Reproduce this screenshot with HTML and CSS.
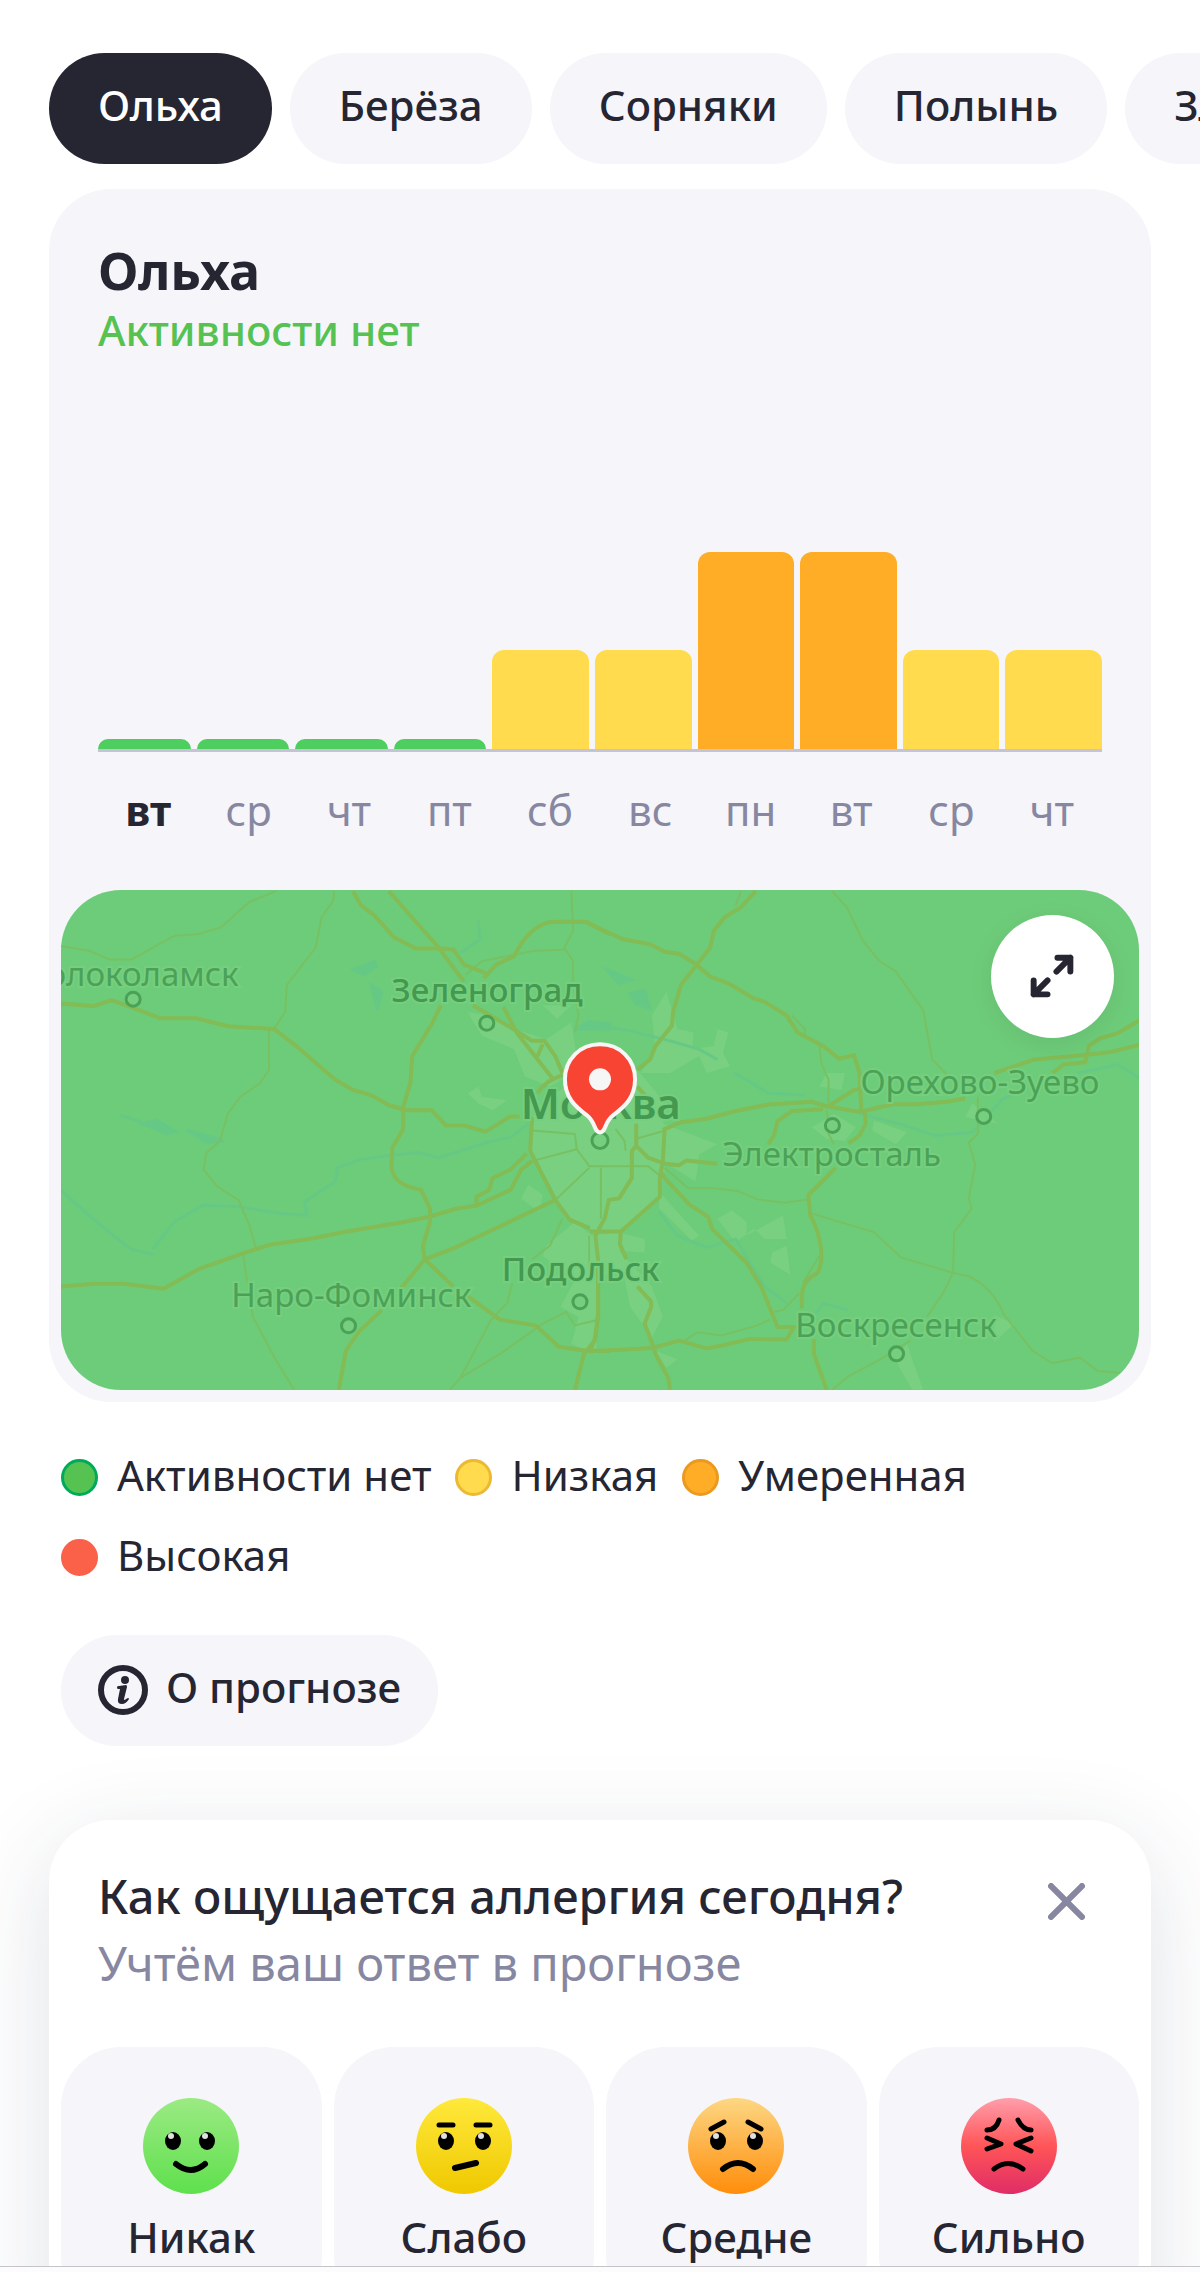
FILE: index.html
```
<!DOCTYPE html>
<html lang="ru">
<head>
    <meta charset="UTF-8">
    <meta name="viewport" content="width=device-width, initial-scale=1.0">
    <title>Аллергия: прогноз</title>
    <link rel="stylesheet" href="styles.css">
</head>
<body>
    <main class="page">
        <nav class="tabs" aria-label="Аллергены">
            <button class="tab tab-active" type="button">Ольха</button>
            <button class="tab" type="button">Берёза</button>
            <button class="tab" type="button">Сорняки</button>
            <button class="tab" type="button">Полынь</button>
            <button class="tab" type="button">Злаки</button>
        </nav>

        <section class="forecast">
            <header class="forecast-header">
                <h1>Ольха</h1>
                <p class="forecast-level">Активности нет</p>
            </header>

            <div class="chart">
                <div class="bar none"></div>
                <div class="bar none"></div>
                <div class="bar none"></div>
                <div class="bar none"></div>
                <div class="bar low"></div>
                <div class="bar low"></div>
                <div class="bar medium"></div>
                <div class="bar medium"></div>
                <div class="bar low"></div>
                <div class="bar low"></div>
            </div>
            <div class="days">
                <span class="today">вт</span>
                <span>ср</span>
                <span>чт</span>
                <span>пт</span>
                <span>сб</span>
                <span>вс</span>
                <span>пн</span>
                <span>вт</span>
                <span>ср</span>
                <span>чт</span>
            </div>

            <div class="map">
                <svg class="map-picture" viewBox="0 0 1076 499" aria-label="Карта активности">
                    <!-- west half -->
                    <g transform="translate(-12 -10) scale(.35714 .33807)">
                        <g class="land">
                            <path d="M1350 700L1460 590L1600 560V1040L1530 1040L1450 1000L1400 900L1350 820Z" />
                            <path d="M1170 390L1230 400L1300 440L1390 470L1460 420L1480 560L1400 610L1330 580L1300 500L1210 460Z" />
                            <path d="M1170 630L1200 610L1210 640L1280 650L1240 680L1200 660Z" />
                            <path d="M1340 900L1380 930L1370 980L1320 940Z" />
                            <path d="M1390 1080L1470 1010L1530 1060V1400L1460 1370L1480 1290L1430 1260L1470 1180L1380 1110Z" />
                            <path d="M1380 370H1460L1420 410Z" />
                        </g>
                        <g class="water">
                            <path class="lake" d="M850 265L910 240L915 255L880 280ZM900 310L930 330L918 385ZM260 720L300 708L355 742L330 750ZM385 738L490 770L440 775ZM1470 440L1510 418L1568 425V440Z" />
                            <path d="M200 695L260 715M33 915L90 970L180 1050L230 1090L290 1105M290 1090L350 1010L430 960L530 965L650 985L720 990L715 950L800 890L805 850L870 825L940 815L1030 805L1090 820L1180 790L1240 770L1290 760L1340 720M1200 120L1205 175L1150 215" />
                        </g>
                        <g class="road-thin">
                            <path d="M33 195L115 210L170 235H230L350 165L415 160L480 140L560 65L635 33M797 33L795 60L762 110L745 200L665 310L660 390L630 438M615 440V560L590 600L535 640L500 690L478 770L440 805L432 855L470 905L530 945L560 1020L578 1085M543 1105L550 1160L570 1290L630 1410L685 1505" />
                            <path d="M1460 33L1465 150L1440 200L1465 240V310L1480 400L1470 450M1440 205L1350 210L1210 240L1165 280M1435 1000L1400 1080L1350 1120M1295 1190L1280 1250L1235 1300L1150 1470L1120 1505M1150 1470L1260 1400L1380 1310L1445 1275L1470 1315L1530 1300M1415 945L1510 850M1350 830L1475 795L1470 750L1350 740M1475 795L1510 845H1568M1545 845L1530 1030M1510 1050V1150" />
                        </g>
                        <g class="road">
                            <path d="M33 365L125 372L175 355L220 372L310 408H410L500 432L630 440L700 498L800 590L850 620L900 635L950 665L1000 680H1070L1110 725H1160L1220 743L1290 698H1315" />
                            <path d="M33 1200L130 1192H210L320 1207L420 1148L540 1103L620 1076L740 1058L820 1040L980 1012L1060 995L1140 970L1195 962V935L1230 915L1240 880L1290 855L1335 808M1195 962L1290 915L1320 855L1350 830" />
                            <path d="M850 33L872 75L910 105L965 170L1025 202H1100L1130 205L1160 250L1220 275M950 33L1085 195L1160 300M1215 290L1250 250L1300 225C1330 160 1370 125 1410 123H1500L1568 160M1185 370L1290 435L1350 475L1385 475L1415 520L1435 570M1270 375L1310 455L1410 590M1380 485L1365 520M1365 630C1390 590 1410 590 1435 575" />
                            <path d="M1095 370L1070 425L1015 520L1010 600L990 670V735L960 790L957 850C965 890 990 905 1040 915L1065 970V1010L1045 1080L1050 1120L985 1205M930 1270L865 1335L830 1390L810 1505M1050 1120L1130 1200M1165 1225L1260 1298L1360 1315L1425 1378L1500 1390H1568M1050 1120L1130 1088L1415 945" />
                            <path d="M1350 700L1345 800L1415 945L1455 1003L1530 1037H1568M1565 940L1530 1037L1535 1120V1290L1525 1360L1495 1400L1470 1505" />
                        </g>
                    </g>
                    <!-- east half -->
                    <g transform="translate(528 -10) scale(.3635 .33807)">
                        <g class="land">
                            <path d="M0 620L130 560L200 650L205 860L190 930L90 1035L0 1040Z" />
                            <path d="M170 400L210 330L240 440L285 450L280 500L340 490L350 440L380 450L365 510L385 550L320 570L300 520L220 570H140L180 500Z" />
                            <path d="M610 730L670 690L730 730L700 770L650 765ZM650 570L700 570L690 620L630 610ZM780 710L870 745L840 780L775 740ZM200 720L350 780L300 810L290 890L200 830ZM350 1000L390 975L430 1010V1050L530 990L540 1060L480 1060L450 1030L400 1070ZM500 1100L540 1080L550 1165L495 1130ZM190 920L240 980L300 1050L280 1065L190 970ZM1050 660L1120 720L1030 700Z" />
                            <path d="M0 1050L80 1040L150 1060V1100L80 1095L170 1200L200 1290L170 1350L110 1260L90 1150L0 1180ZM180 1390L240 1415L210 1440ZM870 1370L915 1505H885L840 1420ZM1110 1285L1165 1310L1110 1365Z" />
                        </g>
                        <g class="water">
                            <path class="lake" d="M40 260L115 295L80 305ZM110 335L150 325L165 380L125 365Z" />
                            <path d="M0 425L110 445L220 475L300 500L350 530M395 570L430 590L490 630L590 635M740 690L850 720L950 755L1050 745L1130 650L1200 610M190 980L240 1050L320 1085L400 1060L440 1130L480 1200L540 1250M620 1280L640 1250L710 1270M1340 570L1450 545L1508 585" />
                        </g>
                        <g class="road-thin">
                            <path d="M665 33L705 80L750 180L795 240L840 270L915 385L940 530L980 575M1065 640V750L1040 775L1058 840L1040 940L1048 970L1000 1040L997 1160L970 1220L925 1290M880 1360L790 1420L710 1465L665 1505M610 985L780 1040L855 1115L997 1160L1040 1170C1090 1195 1120 1240 1135 1280L1215 1390L1270 1427L1345 1410L1395 1450L1455 1455" />
                            <path d="M630 490L635 540L655 590V660M650 680L655 750L670 780M205 850L270 910H340L405 918L460 943L535 953L598 943M415 33L400 75M30 850V1000M0 845H160L200 880M125 765L205 740M70 735L95 770L98 800M505 1275L530 1270L575 1220M260 1360L295 1335L360 1345L460 1315L495 1297M555 400L590 440V460M630 1110L585 1190" />
                        </g>
                        <g class="road">
                            <path d="M0 130L90 175L165 190L205 212L245 218L290 248L330 285L380 305L450 350L480 360L540 400L570 450L640 490L685 528L725 517L740 570L745 680M455 33L415 80L370 110L340 150L330 200L290 255L250 310L228 390L225 430L180 490L165 530L130 560" />
                            <path d="M200 738L250 715L320 705L400 682L490 663L610 655L650 668L740 685L830 662H900L980 655L1030 645M1110 570L1220 530L1360 517L1430 508L1508 487M1270 570L1300 545L1360 538L1370 490L1400 468L1450 452L1508 415M655 668L725 620L740 618M755 685L757 720L740 755L710 778M640 677L555 682L515 712L505 755L490 780" />
                            <path d="M130 610L155 640M127 720V785L160 820L205 838L245 842L265 828L350 838M205 738L200 830L192 880V935L85 1038H0M127 785L115 800V880L80 940L52 945L40 1000L15 1050L22 1120V1280L15 1350L0 1392M0 1392L170 1382L245 1360L320 1383L360 1375L440 1355L540 1357L560 1320H515L470 1200L430 1130L335 1030L325 995L275 960L205 880L192 855" />
                            <path d="M85 1038L82 1075L100 1120M130 1200L168 1245V1260L150 1310L175 1380L180 1400L215 1470L220 1505M675 850L600 930L605 990C635 1050 645 1120 625 1160C590 1180 578 1200 582 1265M615 1355V1400L635 1460L650 1505" />
                        </g>
                    </g>

                    <g class="town">
                        <circle cx="72" cy="109" r="7" />
                        <circle cx="425" cy="133" r="7" />
                        <circle cx="538" cy="250" r="8" />
                        <circle cx="287" cy="435" r="7" />
                        <circle cx="518" cy="411" r="7" />
                        <circle cx="770" cy="235" r="7" />
                        <circle cx="921" cy="226" r="7" />
                        <circle cx="834" cy="463" r="7" />
                    </g>
                    <g class="town-name">
                        <text x="-36" y="96">Волоколамск</text>
                        <text x="170" y="416">Наро-Фоминск</text>
                        <text x="798" y="204">Орехово-Зуево</text>
                        <text x="660" y="275">Электросталь</text>
                        <text x="733" y="446">Воскресенск</text>
                        <text class="strong" x="330" y="112">Зеленоград</text>
                        <text class="strong" x="440" y="390">Подольск</text>
                        <text class="capital" x="459" y="229">Москва</text>
                    </g>

                    <path class="pin" d="M538 154C518 154 503 169 503 189C503 207 513 216 525 225C534 232 532 242 538 242C544 242 542 232 551 225C563 216 573 207 573 189C573 169 558 154 538 154Z" />
                    <circle class="pin-hole" cx="538" cy="189" r="11" />
                </svg>
                <button class="map-expand" type="button" aria-label="Развернуть карту">
                    <svg viewBox="0 0 124 124">
                        <path d="M66 57L80 43M67 43H80V57M57 66L43 80M43 66V80H57" />
                    </svg>
                </button>
            </div>
        </section>

        <ul class="legend">
            <li><span class="dot dot-none"></span>Активности нет</li>
            <li><span class="dot dot-low"></span>Низкая</li>
            <li><span class="dot dot-medium"></span>Умеренная</li>
            <li><span class="dot dot-high"></span>Высокая</li>
        </ul>

        <button class="about" type="button">
            <svg class="about-icon" viewBox="0 0 50 50">
                <circle class="ring" cx="25" cy="25" r="22" />
                <circle cx="27" cy="15" r="4" />
                <path d="M19 22Q19 21 21 21L28 20Q29 20 29 22L26 34Q26 36 28 34L30 33Q31 33 31 34Q28 39 24 39Q19 39 20 34L22 24L20 24Q19 24 19 22Z" />
            </svg>
            О прогнозе
        </button>

        <section class="survey">
            <header class="survey-header">
                <div>
                    <h2>Как ощущается аллергия сегодня?</h2>
                    <p>Учтём ваш ответ в прогнозе</p>
                </div>
                <button class="close" type="button" aria-label="Закрыть">
                    <svg viewBox="0 0 36 36"><path d="M3 3L33 33M33 3L3 33" /></svg>
                </button>
            </header>
            <div class="answers">
                <button class="answer" type="button">
                    <svg class="face" viewBox="0 0 96 96">
                        <defs>
                            <linearGradient id="green" x2="0" y2="1"><stop stop-color="#9bea83" /><stop offset="1" stop-color="#5fe04d" /></linearGradient>
                            <linearGradient id="yellow" x2="0" y2="1"><stop stop-color="#ffe93b" /><stop offset="1" stop-color="#efc800" /></linearGradient>
                            <linearGradient id="orange" x2="0" y2="1"><stop stop-color="#fdd783" /><stop offset="1" stop-color="#ff8d0a" /></linearGradient>
                            <linearGradient id="red" x2="0" y2="1"><stop stop-color="#ff9eac" /><stop offset=".5" stop-color="#ff5557" /><stop offset="1" stop-color="#e02c67" /></linearGradient>
                            <g id="eye"><ellipse rx="8" ry="9" /><circle class="glint" cx="-2" cy="-5" r="3" /></g>
                        </defs>
                        <circle cx="48" cy="48" r="48" fill="url(#green)" />
                        <use href="#eye" x="30" y="43" />
                        <use href="#eye" x="64" y="43" />
                        <path class="line thick" d="M33 66Q48 78 62 66" />
                    </svg>
                    Никак
                </button>
                <button class="answer" type="button">
                    <svg class="face" viewBox="0 0 96 96">
                        <circle cx="48" cy="48" r="48" fill="url(#yellow)" />
                        <use href="#eye" x="30" y="43" />
                        <use href="#eye" x="67" y="43" />
                        <path class="line" d="M23 27H37M60 27H74" />
                        <path class="line thick" d="M39 70L60 65" />
                    </svg>
                    Слабо
                </button>
                <button class="answer" type="button">
                    <svg class="face" viewBox="0 0 96 96">
                        <circle cx="48" cy="48" r="48" fill="url(#orange)" />
                        <use href="#eye" x="30" y="43" />
                        <use href="#eye" x="67" y="43" />
                        <path class="line" d="M23 31L36 24M60 24L73 31" />
                        <path class="line thick" d="M35 71Q50 59 65 71" />
                    </svg>
                    Средне
                </button>
                <button class="answer" type="button">
                    <svg class="face" viewBox="0 0 96 96">
                        <circle cx="48" cy="48" r="48" fill="url(#red)" />
                        <path class="line" d="M26 32Q35 32 38 22M57 22Q62 32 70 32M26 40L40 46L26 51M70 40L55 46L70 53" />
                        <path class="line" d="M33 71Q47 60 62 71" />
                    </svg>
                    Сильно
                </button>
            </div>
        </section>
    </main>
    <footer class="bottom-bar"></footer>
</body>
</html>
```

FILE: styles.css
```
* {
    margin: 0;
    padding: 0;
    box-sizing: border-box;
}

body {
    font-family: 'Noto Sans', 'Open Sans', sans-serif;
    font-size: 42px;
    line-height: 56px;
    color: #262633;
    background: #fff;
    height: 100vh;
    display: flex;
    flex-direction: column;
}

button {
    font: inherit;
    font-weight: 500;
    color: inherit;
    border: none;
    background: none;
    cursor: pointer;
}

svg {
    display: block;
}

.page {
    flex: 1;
    min-height: 0;
    overflow: hidden;
    padding: 53px 49px 0;
}

/* Allergen tabs */
.tabs {
    display: flex;
    gap: 18px;
    margin-right: -49px;
    overflow: hidden;
}

.tab {
    flex: none;
    height: 111px;
    padding: 0 49px 8px;
    border-radius: 56px;
    background: #f5f5fa;
}

.tab-active {
    color: #fff;
    background: #262633;
}

/* Forecast card */
.forecast {
    margin-top: 25px;
    padding: 49px 12px 12px;
    border-radius: 62px;
    background: #f5f5fa;
}

.forecast-header {
    padding: 0 37px;
}

h1 {
    font-size: 52px;
    line-height: 64px;
    font-weight: 700;
}

.forecast-level {
    font-weight: 500;
    color: #55c252;
}

.chart {
    height: 394px;
    margin: 0 37px;
    display: flex;
    align-items: flex-end;
    gap: 6px;
    border-bottom: 3px solid #c4c4d6;
}

.bar {
    flex: 97;
    border-radius: 12px 12px 0 0;
}

.none {
    flex: 93;
    height: 10px;
    background: #4dce5f;
}

.low {
    height: 99px;
    background: #ffdb4d;
}

.medium {
    height: 197px;
    background: #ffad26;
}

.days {
    display: flex;
    margin: 30px 37px 52px;
    color: #8787a1;
}

.days span {
    flex: 1;
    text-align: center;
}

.days .today {
    font-weight: 700;
    color: #262633;
}

/* Map */
.map {
    position: relative;
    overflow: hidden;
    border-radius: 60px;
    background: #6dcc79;
}

.map-picture {
    width: 100%;
}

.land {
    fill: #79d081;
}

.water path {
    fill: none;
    stroke: #66c885;
    stroke-width: 3px;
    vector-effect: non-scaling-stroke;
}

.water .lake {
    fill: #66c885;
}

.road path,
.road-thin path {
    fill: none;
    stroke: #83bb55;
    stroke-width: 4px;
    stroke-linejoin: round;
    vector-effect: non-scaling-stroke;
}

.road-thin path {
    stroke: #78c162;
    stroke-width: 2px;
}

.town {
    fill: #76cf7f;
    stroke: #4ba257;
    stroke-width: 3px;
}

.town-name {
    font-size: 33px;
    fill: #4ba257;
    stroke: #76cf7f;
    stroke-width: 4px;
    paint-order: stroke;
}

.town-name .strong {
    font-weight: 500;
    fill: #43994f;
}

.town-name .capital {
    font-size: 42px;
    font-weight: 600;
    fill: #43994f;
}

.pin {
    fill: #f84433;
    stroke: #f6f6f6;
    stroke-width: 4px;
}

.pin-hole {
    fill: #f6f6f6;
}

.map-expand {
    position: absolute;
    top: 25px;
    right: 25px;
    width: 123px;
    height: 123px;
    border-radius: 50%;
    background: #fff;
    box-shadow: 0 6px 24px rgba(38, 38, 51, 0.08);
}

.map-expand path {
    fill: none;
    stroke: #262633;
    stroke-width: 6;
    stroke-linecap: round;
    stroke-linejoin: round;
}

/* Legend */
.legend {
    display: flex;
    flex-wrap: wrap;
    gap: 24px;
    margin: 45px 12px 0;
    list-style: none;
}

.legend li {
    display: flex;
    align-items: center;
    gap: 19px;
}

.dot {
    width: 37px;
    height: 37px;
    margin-top: 6px;
    border: 3px solid;
    border-radius: 50%;
}

.dot-none {
    background: #55c252;
    border-color: #00aa5b;
}

.dot-low {
    background: #ffdb4d;
    border-color: #edb832;
}

.dot-medium {
    background: #ffad26;
    border-color: #ea9a20;
}

.dot-high {
    background: #fb6149;
    border-color: #fb6149;
}

.about {
    display: flex;
    align-items: center;
    gap: 18px;
    height: 111px;
    margin: 52px 12px 0;
    padding: 0 37px 6px;
    border-radius: 56px;
    background: #f5f5fa;
}

.about-icon {
    width: 50px;
    height: 50px;
    margin-top: 6px;
    fill: #262633;
}

.about-icon .ring {
    fill: none;
    stroke: #262633;
    stroke-width: 6;
}

/* Survey */
.survey {
    margin-top: 74px;
    padding: 43px 12px 49px;
    border-radius: 62px;
    background: #fff;
    box-shadow: 0 24px 96px rgba(38, 50, 80, 0.14);
}

.survey-header {
    display: flex;
    justify-content: space-between;
    align-items: flex-start;
    padding: 0 37px;
}

.survey h2,
.survey p {
    font-size: 47px;
    line-height: 67px;
}

.survey h2 {
    font-weight: 500;
}

.survey p {
    color: #8787a1;
}

.close {
    margin: 20px 17px;
}

.close svg {
    width: 37px;
    height: 37px;
    stroke: #8787a1;
    stroke-width: 6;
    stroke-linecap: round;
}

.answers {
    display: grid;
    grid-template-columns: repeat(4, 1fr);
    gap: 12px;
    margin-top: 50px;
}

.answer {
    display: flex;
    flex-direction: column;
    align-items: center;
    gap: 15px;
    padding: 51px 0;
    border-radius: 60px;
    background: #f5f5fa;
}

.face {
    width: 96px;
    height: 96px;
}

.line {
    fill: none;
    stroke: #000;
    stroke-width: 5;
    stroke-linecap: round;
    stroke-linejoin: round;
}

.thick {
    stroke-width: 6;
}

.glint {
    fill: #e0e0e0;
}

.bottom-bar {
    flex: none;
    height: 6px;
    border-top: 1px solid #c4c4c9;
    background: #fcfcfd;
}
```
